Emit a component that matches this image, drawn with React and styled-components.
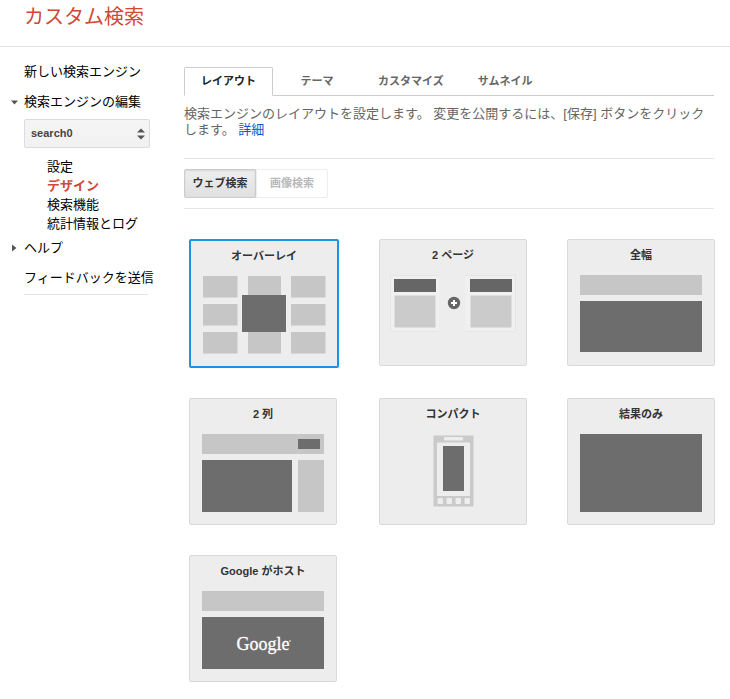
import React, { useState } from "react";
import styled, { createGlobalStyle, css } from "styled-components";

const GlobalStyle = createGlobalStyle`
  *, *::before, *::after { box-sizing: border-box; }
  body {
    margin: 0;
    background: #fff;
    color: #000;
    font-family: "Liberation Sans", "Noto Sans CJK JP", sans-serif;
    font-size: 13px;
  }
  button, select { font-family: inherit; margin: 0; }
`;

const Header = styled.header`
  height: 47px;
  padding: 0 24px;
  border-bottom: 1px solid #e5e5e5;
`;

const Title = styled.h1`
  margin: 0;
  color: #d14836;
  font-size: 20px;
  font-weight: 400;
  line-height: 34px;
`;

const Body = styled.div`
  display: flex;
  align-items: flex-start;
`;

const Sidebar = styled.nav`
  flex: none;
  width: 184px;
  padding: 10px 32px 0 10px;
`;

const NavRow = styled.div`
  display: flex;
  align-items: center;
  height: 30px;
  white-space: nowrap;
  & > a { padding-bottom: 3px; }
`;

const Expander = styled.span`
  flex: none;
  display: flex;
  width: 14px;
`;

const NavLink = styled.a`
  color: ${(p) => (p.$active ? "#d14836" : "#000")};
  font-weight: ${(p) => (p.$active ? 700 : 400)};
  text-decoration: none;
`;

const EngineField = styled.label`
  display: grid;
  align-items: center;
  width: 126px;
  margin: 2px 0 0 14px;
  & > * { grid-area: 1 / 1; }
  & > svg { justify-self: end; margin-right: 5px; pointer-events: none; }
`;

const EngineSelect = styled.select`
  appearance: none;
  width: 100%;
  height: 29px;
  padding: 0 20px 2px 6px;
  border: 1px solid #dcdcdc;
  border-radius: 2px;
  background: linear-gradient(#f5f5f5, #f1f1f1);
  color: #444;
  font-size: 11px;
  font-weight: 700;
`;

const SubNav = styled.ul`
  margin: 9px 0 0;
  padding: 0 0 0 37px;
  list-style: none;
  line-height: 19px;
  white-space: nowrap;
`;

const SideRule = styled.hr`
  width: 124px;
  margin: 1px 0 0 14px;
  border: 0;
  border-top: 1px solid #e5e5e5;
`;

const Main = styled.main`
  flex: 1;
  min-width: 0;
  padding: 20px 16px 16px 0;
`;

const Tabs = styled.div`
  display: flex;
  height: 29px;
  box-shadow: inset 0 -1px #ccc;
`;

const Tab = styled.button`
  min-width: 88px;
  padding: 0 16px;
  border: 1px solid transparent;
  background: none;
  color: #666;
  font-size: 11px;
  font-weight: 700;
  line-height: 25px;
  ${(p) =>
    p.$active &&
    css`
      border-color: #ccc #ccc #fff;
      border-radius: 2px 2px 0 0;
      background: #fff;
      color: #222;
    `}
`;

const Description = styled.p`
  margin: 10px 0 20px;
  color: #666;
  line-height: 16px;
`;

const DetailLink = styled.a`
  display: inline-block;
  height: 16px;
  color: #15c;
  text-decoration: none;
`;

const Toolbar = styled.div`
  display: flex;
  padding: 10px 0;
  border: solid #e5e5e5;
  border-width: 1px 0;
`;

const Toggle = styled.button`
  width: 72px;
  height: 29px;
  padding: 0 0 3px;
  border: 1px solid #eee;
  border-radius: 0 2px 2px 0;
  background: #fff;
  color: #b8b8b8;
  font-size: 11px;
  font-weight: 700;
  ${(p) =>
    p.$active &&
    css`
      border-color: #ccc;
      border-radius: 2px 0 0 2px;
      background: linear-gradient(#eee, #e0e0e0);
      box-shadow: inset 0 1px 2px rgba(0, 0, 0, 0.1);
      color: #333;
    `}
`;

const CardGrid = styled.div`
  display: grid;
  grid-template-columns: repeat(3, max-content);
  justify-content: space-between;
  align-items: start;
  justify-items: start;
  row-gap: 30px;
  margin: 30px -1px 0 5px;
`;

const Card = styled.button`
  display: block;
  padding: 7px 12px 12px;
  border: ${(p) => (p.$active ? "2px solid #1a93e6" : "1px solid #d9d9d9")};
  border-radius: 2px;
  background: #ededed;
  color: #333;
  text-align: center;
`;

const CardTitle = styled.span`
  display: block;
  height: 28px;
  font-size: 11px;
  font-weight: 700;
  line-height: 17px;
`;

const Thumb = styled.svg`
  display: block;
  width: 122px;
  height: 78px;
  overflow: visible;
`;

const LIGHT = "#c6c6c6";
const DARK = "#6d6d6d";

const OverlayArt = () => (
  <>
    {[0, 28, 56].map((y) =>
      [0, 45, 88].map((x) => (
        <rect key={`${x}-${y}`} x={x} y={y} width={x === 45 ? 33 : 34.5} height="21.5" fill={LIGHT} />
      ))
    )}
    <rect x="39" y="19" width="44" height="37" fill={DARK} />
  </>
);

const PageArt = ({ x, flip }) => (
  <g transform={`translate(${x} 0)`}>
    <path
      d={flip ? "M-3 .5H47.5V56.5H-3" : "M47 .5H-1.5V56.5H47"}
      fill="#f0f0f0"
      stroke="#e5e5e5"
    />
    <rect x="2" y="4" width="42" height="13" fill="#666" />
    <rect x="2.5" y="20.5" width="41" height="32" fill="#cbcbcb" />
  </g>
);

const TwoPageArt = () => (
  <>
    <PageArt x={0} />
    <PageArt x={76} flip />
    <circle cx="62" cy="28" r="6.2" fill="#666" />
    <path d="M62 25v6M59 28h6" stroke="#fff" strokeWidth="2" />
  </>
);

const FullWidthArt = () => (
  <>
    <rect width="122" height="20" fill={LIGHT} />
    <rect y="26" width="122" height="51" fill={DARK} />
  </>
);

const TwoColumnArt = () => (
  <>
    <rect width="122" height="20" fill={LIGHT} />
    <rect x="96" y="5" width="22" height="10" fill={DARK} />
    <rect y="26" width="90" height="52" fill={DARK} />
    <rect x="96" y="26" width="26" height="52" fill={LIGHT} />
  </>
);

const CompactArt = () => (
  <>
    <rect x="41.5" y="1.5" width="40" height="71" rx="1" fill="#cacaca" />
    <rect x="52" y="3" width="19" height="3.5" rx="1" fill="#ededed" />
    <rect x="45" y="8.5" width="33" height="53.5" rx="1" fill="#ededed" />
    <rect x="51" y="12" width="21" height="45" fill={DARK} />
    {[45.5, 54.5, 63.5, 72.5].map((x) => (
      <rect key={x} x={x} y="64" width="5.5" height="6" rx="1" fill="#ededed" />
    ))}
  </>
);

const ResultsArt = () => <rect width="122" height="78" fill={DARK} />;

const HostedArt = () => (
  <>
    <rect width="122" height="20" fill={LIGHT} />
    <rect y="26" width="122" height="52" fill={DARK} />
    <text
      x="61"
      y="59"
      textAnchor="middle"
      fill="#fff"
      stroke="#fff"
      strokeWidth="0.3"
      fontFamily="'Liberation Serif', serif"
      fontSize="18"
    >
      Google
    </text>
    <circle cx="88" cy="50" r="0.8" fill="#fff" />
  </>
);

const LAYOUTS = [
  ["オーバーレイ", OverlayArt],
  ["2 ページ", TwoPageArt],
  ["全幅", FullWidthArt],
  ["2 列", TwoColumnArt],
  ["コンパクト", CompactArt],
  ["結果のみ", ResultsArt],
  ["Google がホスト", HostedArt],
];

const TABS = ["レイアウト", "テーマ", "カスタマイズ", "サムネイル"];
const SUB_LINKS = ["設定", "デザイン", "検索機能", "統計情報とログ"];
const SEARCH_TYPES = ["ウェブ検索", "画像検索"];

export default function App() {
  const [tab, setTab] = useState(TABS[0]);
  const [type, setType] = useState(SEARCH_TYPES[0]);
  const [layout, setLayout] = useState(LAYOUTS[0][0]);

  return (
    <>
      <GlobalStyle />
      <Header>
        <Title>カスタム検索</Title>
      </Header>
      <Body>
        <Sidebar>
          <NavRow>
            <Expander />
            <NavLink href="#new">新しい検索エンジン</NavLink>
          </NavRow>
          <NavRow>
            <Expander>
              <svg width="8" height="5" aria-hidden="true">
                <path d="M1 .5h7L4.500 4.500z" fill="#555" />
              </svg>
            </Expander>
            <NavLink href="#edit">検索エンジンの編集</NavLink>
          </NavRow>
          <EngineField>
            <EngineSelect aria-label="検索エンジン" defaultValue="search0">
              <option>search0</option>
            </EngineSelect>
            <svg width="8" height="12" aria-hidden="true">
              <path d="M0 4.500h8L4 .5zM0 7.500h8L4 11.500z" fill="#555" />
            </svg>
          </EngineField>
          <SubNav>
            {SUB_LINKS.map((name) => (
              <li key={name}>
                <NavLink href={`#${name}`} $active={name === "デザイン"}>
                  {name}
                </NavLink>
              </li>
            ))}
          </SubNav>
          <NavRow>
            <Expander>
              <svg width="8" height="8" aria-hidden="true">
                <path d="M2 .5v7L6.500 4z" fill="#555" />
              </svg>
            </Expander>
            <NavLink href="#help">ヘルプ</NavLink>
          </NavRow>
          <NavRow>
            <Expander />
            <NavLink href="#feedback">フィードバックを送信</NavLink>
          </NavRow>
          <SideRule />
        </Sidebar>
        <Main>
          <Tabs role="tablist">
            {TABS.map((name) => (
              <Tab
                key={name}
                role="tab"
                aria-selected={tab === name}
                $active={tab === name}
                onClick={() => setTab(name)}
              >
                {name}
              </Tab>
            ))}
          </Tabs>
          <Description>
            検索エンジンのレイアウトを設定します。 変更を公開するには、[保存] ボタンをクリックします。{" "}
            <DetailLink href="#details">詳細</DetailLink>
          </Description>
          <Toolbar>
            {SEARCH_TYPES.map((name) => (
              <Toggle
                key={name}
                aria-pressed={type === name}
                $active={type === name}
                onClick={() => setType(name)}
              >
                {name}
              </Toggle>
            ))}
          </Toolbar>
          <CardGrid>
            {LAYOUTS.map(([name, Art]) => (
              <Card
                key={name}
                aria-pressed={layout === name}
                $active={layout === name}
                onClick={() => setLayout(name)}
              >
                <CardTitle>{name}</CardTitle>
                <Thumb viewBox="0 0 122 78" aria-hidden="true">
                  <Art />
                </Thumb>
              </Card>
            ))}
          </CardGrid>
        </Main>
      </Body>
    </>
  );
}
